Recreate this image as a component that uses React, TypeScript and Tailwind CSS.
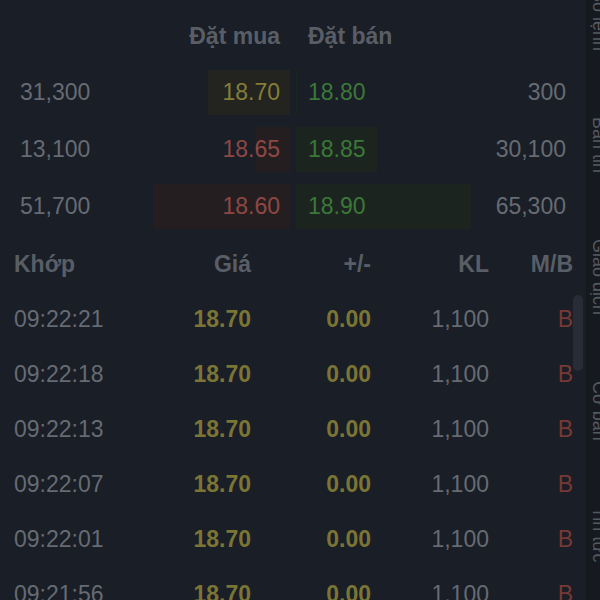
import React from 'react';

type Level = { bidVol: number; bid: string; bidColor: string; barColor: string; ask: string; askVol: number };

const levels: Level[] = [
  { bidVol: 31300, bid: '18.70', bidColor: 'text-[#847d37]', barColor: 'bg-[#23241f]', ask: '18.80', askVol: 300 },
  { bidVol: 13100, bid: '18.65', bidColor: 'text-[#8e4843]', barColor: 'bg-[#251e21]', ask: '18.85', askVol: 30100 },
  { bidVol: 51700, bid: '18.60', bidColor: 'text-[#8e4843]', barColor: 'bg-[#251e21]', ask: '18.90', askVol: 65300 },
];

const trades = ['09:22:21', '09:22:18', '09:22:13', '09:22:07', '09:22:01', '09:21:56'];

const fmt = (n: number) => n.toLocaleString('en-US');

export default function App() {
  return (
    <div
      className="flex h-[600px] w-[600px] overflow-hidden bg-[#1a1e26] text-[23px] leading-none text-[#666b73]"
      style={{ fontFamily: '"Liberation Sans", Arial, sans-serif' }}
    >
      <div className="relative flex w-[586px] shrink-0 flex-col">
        {/* Order book */}
        <div className="mt-[14px] flex h-[44px] shrink-0 items-center text-[23px] font-bold text-[#595e66]">
          <div className="w-[120px]" />
          <div className="flex w-[170px] justify-end pr-[10px]">Đặt mua</div>
          <div className="w-[6px]" />
          <div className="pl-[12px]">Đặt bán</div>
        </div>
        <div className="mt-[12px] flex shrink-0 flex-col gap-[12px]">
          {levels.map(l => (
            <div key={l.bid} className="flex h-[45px] shrink-0 items-center">
              <div className="w-[120px] pl-[20px]">{fmt(l.bidVol)}</div>
              <div className="relative flex h-full w-[170px] items-center justify-end pr-[10px]">
                <div className={`absolute right-0 top-0 h-full ${l.barColor}`} style={{ width: l.bidVol / 380 }} />
                <span className={`relative ${l.bidColor}`}>{l.bid}</span>
              </div>
              <div className="w-[6px]" />
              <div className="relative flex h-full w-[174px] items-center pl-[12px]">
                <div className="absolute left-0 top-0 h-full bg-[#1b241f]" style={{ width: l.askVol / 373 }} />
                <span className="relative text-[#3b7838]">{l.ask}</span>
              </div>
              <div className="flex flex-1 justify-end pr-[20px]">{fmt(l.askVol)}</div>
            </div>
          ))}
        </div>

        {/* Matched trades */}
        <div className="mt-[8px] flex h-[55px] shrink-0 items-center pl-[14px] font-bold text-[#595e66]">
          <div className="w-[136px]">Khớp</div>
          <div className="w-[101px] text-right">Giá</div>
          <div className="w-[120px] text-right">+/-</div>
          <div className="w-[118px] text-right">KL</div>
          <div className="w-[84px] text-right">M/B</div>
        </div>
        {trades.map(t => (
          <div key={t} className="flex h-[55px] shrink-0 items-center pl-[14px]">
            <div className="w-[136px]">{t}</div>
            <div className="w-[101px] text-right font-bold text-[#7b7535]">18.70</div>
            <div className="w-[120px] text-right font-bold text-[#7b7535]">0.00</div>
            <div className="w-[118px] text-right">1,100</div>
            <div className="w-[84px] text-right text-[#763935]">B</div>
          </div>
        ))}

        <div className="absolute right-[3px] top-[295px] h-[76px] w-[10px] rounded-full bg-[#282c34]" />
      </div>

      {/* Side tabs */}
      <div className="w-[14px] shrink-0 overflow-hidden border-l border-[#14171c] bg-[#16191f]">
        <div className="-mt-[10px] flex w-[30px] flex-col items-start gap-[66px] pl-[3px] text-[18px] text-[#555a61]">
          <span className="[writing-mode:vertical-rl]">Sổ lệnh</span>
          <span className="[writing-mode:vertical-rl]">Bản tin</span>
          <span className="[writing-mode:vertical-rl]">Giao dịch</span>
          <span className="[writing-mode:vertical-rl]">Cơ bản</span>
          <span className="[writing-mode:vertical-rl]">Tin tức</span>
        </div>
      </div>
    </div>
  );
}
